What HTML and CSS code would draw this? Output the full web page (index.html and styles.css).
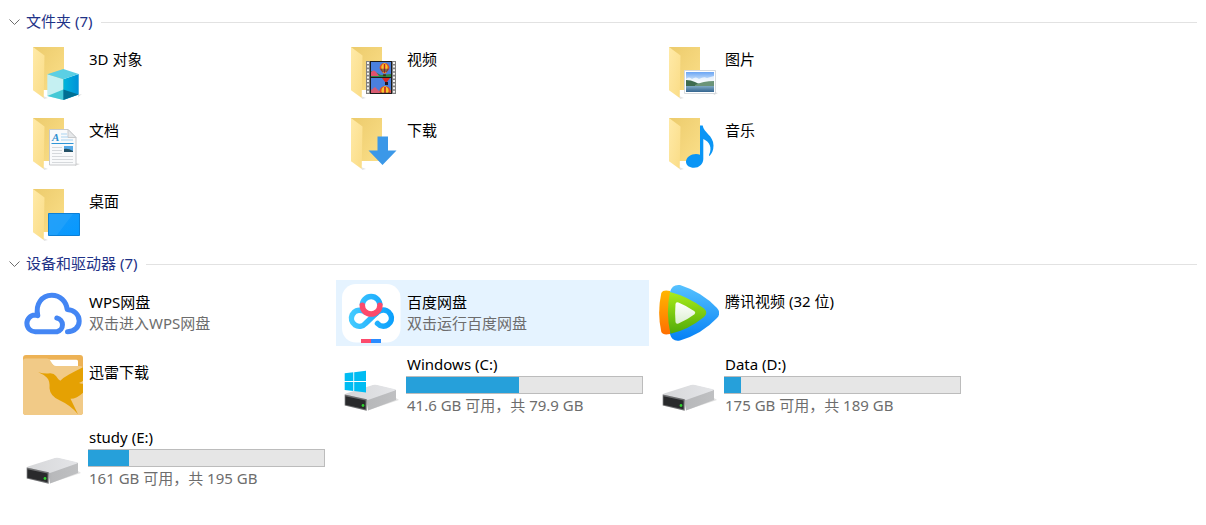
FILE: index.html
```html
<!DOCTYPE html>
<html lang="zh-CN">
<head>
<meta charset="UTF-8">
<title>此电脑</title>
<link rel="stylesheet" href="styles.css">
</head>
<body>

<!-- shared shapes -->
<svg class="defs" width="0" height="0" aria-hidden="true">
  <defs>
    <linearGradient id="back" x1="0" y1="0" x2="1" y2="1">
      <stop offset="0" stop-color="#eccb6c"/><stop offset="1" stop-color="#fbdf89"/>
    </linearGradient>
    <linearGradient id="flap" x1="0" y1="0" x2="1" y2="1">
      <stop offset="0" stop-color="#ffeaa8"/><stop offset="1" stop-color="#fadc86"/>
    </linearGradient>
    <linearGradient id="drive-top" x1="0" y1="0" x2="1" y2="0">
      <stop offset="0" stop-color="#d6d7d9"/><stop offset="1" stop-color="#e4e5e8"/>
    </linearGradient>
    <linearGradient id="drive-side" x1="0" y1="0" x2="1" y2="0">
      <stop offset="0" stop-color="#97989a"/><stop offset="0.5" stop-color="#b8b9bb"/><stop offset="1" stop-color="#bfc0c2"/>
    </linearGradient>
    <linearGradient id="sky" x1="0" y1="0" x2="0" y2="1">
      <stop offset="0" stop-color="#6aa5f4"/><stop offset="0.5" stop-color="#e3f1fb"/><stop offset="1" stop-color="#8fb6d4"/>
    </linearGradient>
    <linearGradient id="water" x1="0" y1="0" x2="0" y2="1">
      <stop offset="0" stop-color="#7fa9c4"/><stop offset="1" stop-color="#34658f"/>
    </linearGradient>
    <symbol id="folder" viewBox="0 0 60 60">
      <path d="M20 54l5 2-4 1z" fill="#e4e4e4"/>
      <path d="M10 5h31v43H10z" fill="url(#back)"/>
      <path d="M10 5l11.500 8.500L20.700 56 10 48.300z" fill="url(#flap)"/>
    </symbol>
    <symbol id="drive" viewBox="0 0 60 60">
      <path d="M25 56l33-11-3-2z" fill="#e3e3e3"/>
      <path d="M3.700 40L33.700 30 55 35v10L27 55.500 25 44z" fill="url(#drive-side)"/>
      <path d="M3.700 39.500Q4 38.800 5 38.500L32 30q2-.6 4 0l18 4.300q1.500.5 0 1.200L27 45z" fill="url(#drive-top)"/>
      <path d="M3.700 39.500l22 4.700v11.500l-22-5.200z" fill="#6d6e70"/>
      <path d="M4.500 41.200l20 4.300v8.800l-20-4.600z" fill="#292a2c"/>
      <circle cx="22" cy="50.500" r="1.400" fill="#2fd32f"/>
    </symbol>
    <symbol id="balloon" viewBox="0 0 12 15">
      <path d="M6 0a5.500 5.500 0 0 1 5.500 5.500Q11 8 7.500 11.500h-3Q1 8 .5 5.500A5.500 5.500 0 0 1 6 0z" fill="#e0501e"/>
      <path d="M6 0q4 2 3.500 5.500L7 11.500H5L2.500 5.500Q2 2 6 0z" fill="#f6c52c"/>
      <path d="M5.200 1h1.600v10H5.200z" fill="#c32020"/>
      <path d="M1 6.500h10L8.500 10h-5z" fill="#26264d" opacity=".5"/>
      <path d="M4.500 12.500h3V15h-3z" fill="#4a2a12"/>
    </symbol>
  </defs>
</svg>

<main>
  <section class="group">
    <h2><button type="button" class="group-header">
      <svg class="chevron" viewBox="0 0 12 8" aria-hidden="true"><path d="M.5 1.500l5 5 5-5"/></svg>
      <span class="group-title">文件夹 (7)</span>
    </button></h2>
    <ul class="tiles">
      <li class="tile">
        <svg class="icon" viewBox="0 0 60 60" aria-hidden="true">
          <defs><linearGradient id="cube-r"><stop offset="0" stop-color="#00b5dc"/><stop offset="1" stop-color="#0091d8"/></linearGradient></defs>
          <use href="#folder"/>
          <path d="M55 53l4-1-4 3z" fill="#ddd"/>
          <path d="M24.300 32.300l16 5V58l-16-4z" fill="#c5f0f2"/>
          <path d="M40.300 37.300l15.400-5.300v20.500L40.300 58z" fill="url(#cube-r)"/>
          <path d="M24.300 32.300L40.300 27l15.400 5-15.400 5.300z" fill="#5bcfe4"/>
          <path d="M24.300 54l16-6.500V58z" fill="#45c9d6"/>
          <path d="M40.300 47.500l15.400 5L40.300 58z" fill="#006f93"/>
        </svg>
        <div class="info"><span class="name">3D 对象</span></div>
      </li>
      <li class="tile">
        <svg class="icon" viewBox="0 0 60 60" aria-hidden="true">
          <use href="#folder"/>
          <path d="M25 19h30v33H25z" fill="#808080"/>
          <path d="M29 19h22v33H29z" fill="#1c1c1c"/>
          <path d="M27 20v32M53 20v32" stroke="#f4f4f4" stroke-width="2" stroke-dasharray="2 1.600"/>
          <path d="M30 20h20v15H30zM30 36h20v15H30z" fill="#4a80dd"/>
          <path d="M30 29l6 2 4 2 10-1v3H30z" fill="#2d8844"/>
          <path d="M30 30q3-3 5 0l3 4h-8z" fill="#e0506d"/>
          <path d="M30 48l4-3 4 4 12-1v3H30z" fill="#d75b72"/>
          <use href="#balloon" x="38" y="21" width="11" height="13.500"/>
          <path d="M41 36h8l-3 4h-2z" fill="#d9281e"/><path d="M44 40h3v3h-3z" fill="#211a24"/>
          <svg x="38" y="44" width="12" height="7" viewBox="0 0 12 7"><use href="#balloon" width="12" height="15"/></svg>
        </svg>
        <div class="info"><span class="name">视频</span></div>
      </li>
      <li class="tile">
        <svg class="icon" viewBox="0 0 60 60" aria-hidden="true">
          <use href="#folder"/>
          <path d="M54 50l5 1-4 2z" fill="#ddd"/>
          <path d="M25.500 28.500h31v23h-31z" fill="#fff" stroke="#d5d9dd"/>
          <path d="M27 30h28v20H27z" fill="url(#sky)"/>
          <path d="M27 37q3-3 6 0 4-3 7 0 5-3 8-1l7-2v7H27z" fill="#fff" opacity=".7"/>
          <path d="M27 38q5 0 9 2l8 4H27z" fill="#3e6b50"/>
          <path d="M36 43q8-4 19-4v5H36z" fill="#6b9478"/>
          <path d="M27 44h28v6H27z" fill="url(#water)"/>
        </svg>
        <div class="info"><span class="name">图片</span></div>
      </li>
      <li class="tile">
        <svg class="icon" viewBox="0 0 60 60" aria-hidden="true">
          <use href="#folder"/>
          <path d="M52 50l5 1-5 2z" fill="#ddd"/>
          <path d="M26.500 16.500H45l8 8V52H26.500z" fill="#f9fafb" stroke="#c8cacc"/>
          <path d="M45 16.500v8h8z" fill="#e6e8ea" stroke="#c8cacc"/>
          <text x="29" y="28" class="doc-letter">A</text>
          <path d="M38 21h6M38 24h7M38 27h12" stroke="#a9d3f0"/>
          <path d="M28.500 30.500h22" stroke="#2e95d6"/>
          <path d="M29 34.500h10M29 37.500h10M29 40.500h10M29 43.500h21M29 46.500h21M29 49.500h21" stroke="#d6d9dc"/>
          <path d="M41 33h9v6h-9z" fill="#55a9e6"/>
          <path d="M41 36q4-1 9 2v1h-9z" fill="#245166"/>
        </svg>
        <div class="info"><span class="name">文档</span></div>
      </li>
      <li class="tile">
        <svg class="icon" viewBox="0 0 60 60" aria-hidden="true">
          <use href="#folder"/>
          <path d="M36.500 23.500h10.500V37.500h8.500L41.500 52 27.500 37.500h9z" fill="#3b98e8"/>
        </svg>
        <div class="info"><span class="name">下载</span></div>
      </li>
      <li class="tile">
        <svg class="icon" viewBox="0 0 60 60" aria-hidden="true">
          <use href="#folder"/>
          <path d="M41 12.500h2.700c.8 7 10.800 10 10.800 20 0 5-1.700 8-4 10.500q-.8-.4-.4-1.300c3.400-7 .4-13-5.800-15.700V46c0 5-4.300 8.800-9.300 8.800-4.500 0-8-2.300-8-6 0-4.500 5-7.800 10-7.800q2.300 0 4 .8z" fill="#0a95f5"/>
        </svg>
        <div class="info"><span class="name">音乐</span></div>
      </li>
      <li class="tile">
        <svg class="icon" viewBox="0 0 60 60" aria-hidden="true">
          <defs><linearGradient id="screen" x1="0" y1="0" x2="1" y2="1"><stop offset="0" stop-color="#1a9af8"/><stop offset="1" stop-color="#0599ff"/></linearGradient></defs>
          <use href="#folder"/>
          <path d="M25.500 29.500h31v22h-31z" fill="url(#screen)" stroke="#0b7fd6"/>
          <path d="M26 51V30h24L34 51z" fill="#2aa5fa" opacity=".6"/>
        </svg>
        <div class="info"><span class="name">桌面</span></div>
      </li>
    </ul>
  </section>

  <section class="group">
    <h2><button type="button" class="group-header">
      <svg class="chevron" viewBox="0 0 12 8" aria-hidden="true"><path d="M.5 1.500l5 5 5-5"/></svg>
      <span class="group-title">设备和驱动器 (7)</span>
    </button></h2>
    <ul class="tiles">
      <li class="tile">
        <svg class="icon" viewBox="0 0 60 60" aria-hidden="true">
          <path d="M33.800 34a7 7 0 0 1 .2 13.700H12.500a8.300 8.300 0 0 1-.6-16.600q1.300 0 2.900.6C12 20 19 11.300 28.800 11.300c8.500 0 14.500 6 15.400 14.200 7 .5 12 5 12 11.400 0 6.200-5 10.800-11.700 10.800" fill="none" stroke="#4486f4" stroke-width="5" stroke-linecap="round" stroke-linejoin="round"/>
        </svg>
        <div class="info app"><span class="name">WPS网盘</span><span class="detail">双击进入WPS网盘</span></div>
      </li>
      <li class="tile selected">
        <svg class="icon" viewBox="0 0 60 60" aria-hidden="true">
          <defs><linearGradient id="pan" gradientUnits="userSpaceOnUse" x1="8" y1="0" x2="53" y2="0"><stop offset="0" stop-color="#46ccff"/><stop offset="1" stop-color="#0a9ffc"/></linearGradient></defs>
          <rect x="1" y="0" width="58.500" height="58.500" rx="14" fill="#fff"/>
          <g fill="none" stroke-width="5.500">
            <path d="M21.300 21.300a8.800 8.800 0 0 1 17.600 0" stroke="url(#pan)"/>
            <path d="M36 28.500L24.500 39.500A8 8 0 1 1 21 26.700q2 .5 4 2" stroke="url(#pan)"/>
            <path d="M36.500 39.500A8 8 0 1 0 40 26.500q-3 1-5 3" stroke="url(#pan)" stroke-linecap="round"/>
            <path d="M21.300 21.300a8.800 8.800 0 0 0 17.600 0" stroke="#fc4a6c" stroke-linecap="round"/>
          </g>
          <path d="M20 55h10v4H20z" fill="#fc4a6c"/><path d="M30 55h10v4H30z" fill="#2a8cff"/>
        </svg>
        <div class="info app"><span class="name">百度网盘</span><span class="detail">双击运行百度网盘</span></div>
      </li>
      <li class="tile">
        <svg class="icon" viewBox="0 0 60 60" aria-hidden="true">
          <defs>
            <linearGradient id="tx-orange" x1="0" y1="0" x2="0" y2="1"><stop offset="0" stop-color="#ffb600"/><stop offset="1" stop-color="#ff6f00"/></linearGradient>
            <linearGradient id="tx-blue" x1="0" y1="0" x2="0" y2="1"><stop offset="0" stop-color="#57c2ff"/><stop offset="1" stop-color="#0480f5"/></linearGradient>
            <linearGradient id="tx-green" x1="0" y1="0" x2="0" y2="1"><stop offset="0" stop-color="#a9ec1b"/><stop offset="1" stop-color="#50aa08"/></linearGradient>
            <linearGradient id="tx-white" x1="0" y1="0" x2="0" y2="1"><stop offset="0" stop-color="#fff"/><stop offset="1" stop-color="#dcefd0"/></linearGradient>
          </defs>
          <path d="M11 7Q4 5.500 2.300 9-2 29 2.300 48 4 51.500 11 50z" fill="url(#tx-orange)"/>
          <path d="M11 8q2-8 10-7Q43 8 58 24q4.500 5 0 10Q43 50 21 56.500 13 58 11 50z" fill="url(#tx-blue)"/>
          <path d="M11 8q18 4.500 34 16.500 4.500 4.200 0 8.500Q29 46 11.500 49.700 6.500 29 11 8z" fill="url(#tx-green)"/>
          <path d="M16.500 20q.3-2.500 3-1.500Q28 22 35.500 27.300q1.500 1.500 0 3Q28 36 19.500 39.500q-2.700.8-3-1.500-.8-9 0-18z" fill="url(#tx-white)"/>
        </svg>
        <div class="info"><span class="name">腾讯视频 (32 位)</span></div>
      </li>
      <li class="tile">
        <svg class="icon" viewBox="0 0 60 60" aria-hidden="true">
          <rect width="60" height="60" rx="3" fill="#edb255"/>
          <path d="M25 4.800h28.500q1.500 0 1.500 1.500V11H31z" fill="#fff"/>
          <path d="M0 6q0-2.500 2.500-2.500H24q2 0 3.200 2l2.300 3.500q1.200 2 3.500 2h24q3 0 3 3v43q0 3-3 3H3q-3 0-3-3z" fill="#f1ca87"/>
          <path d="M15.300 17.300q4.700 1.500 9.700 1.300 5.500-1 8 2.400 2 3.500 4.300 4.700 3.200-3.200 8.700-6.200 7.500-4 14-7.200v13.400q-1.500 1.300-4 2.300 2 1 4 .8v9q-6 6-12.500 6l7.500 15.500q-7.500-9-18-13.700-10-4.300-10.500-12.300.5-7.500-2.500-10.500-3-3.200-8.700-5.500z" fill="#e5a103"/>
        </svg>
        <div class="info"><span class="name">迅雷下载</span></div>
      </li>
      <li class="tile">
        <svg class="icon" viewBox="0 0 60 60" aria-hidden="true">
          <use href="#drive"/>
          <path d="M3.700 18.300l8.600-1V26H3.700zM13.200 17.200L25 15.800V26H13.200zM3.700 27h8.600v9l-8.600-1zM13.200 27H25v10.500l-11.800-1.400z" fill="#00bcf2"/>
        </svg>
        <div class="info drive">
          <span class="name">Windows (C:)</span>
          <div class="bar"><div class="used" style="width: 47.7%"></div></div>
          <span class="detail">41.6 GB 可用，共 79.9 GB</span>
        </div>
      </li>
      <li class="tile">
        <svg class="icon" viewBox="0 0 60 60" aria-hidden="true"><use href="#drive"/></svg>
        <div class="info drive">
          <span class="name">Data (D:)</span>
          <div class="bar"><div class="used" style="width: 7.2%"></div></div>
          <span class="detail">175 GB 可用，共 189 GB</span>
        </div>
      </li>
      <li class="tile">
        <svg class="icon" viewBox="0 0 60 60" aria-hidden="true"><use href="#drive"/></svg>
        <div class="info drive">
          <span class="name">study (E:)</span>
          <div class="bar"><div class="used" style="width: 17.4%"></div></div>
          <span class="detail">161 GB 可用，共 195 GB</span>
        </div>
      </li>
    </ul>
  </section>
</main>

</body>
</html>
```
FILE: styles.css
```css
* {
  box-sizing: border-box;
}

body {
  margin: 0;
  padding: 11px 9px;
  background: #fff;
  color: #000;
  font-family: "Noto Sans", "Noto Sans CJK SC", sans-serif;
  font-size: 15px;
}

.defs {
  position: absolute;
}

.group {
  margin-bottom: 7px;
}

h2 {
  margin: 0;
  font-size: 15px;
  font-weight: normal;
}

.group-header {
  display: flex;
  align-items: center;
  width: 100%;
  height: 22px;
  padding: 0;
  border: none;
  background: none;
  color: #1e3287;
  font: inherit;
  line-height: 20px;
  cursor: pointer;
}

.group-header::after {
  content: "";
  flex: 1;
  height: 1px;
  margin-left: 9px;
  background: #e2e2e2;
}

.group-title {
  padding-bottom: 2px;
}

.chevron {
  width: 12px;
  height: 8px;
  margin-right: 5px;
  fill: none;
  stroke: #6d6d6d;
}

.tiles {
  display: grid;
  grid-template-columns: repeat(auto-fill, 313px);
  gap: 5px;
  margin: 5px 0 0;
  padding: 0 0 0 9px;
  list-style: none;
}

.tile {
  display: flex;
  gap: 5px;
  min-height: 66px;
  padding: 4px 6px 2px 5px;
}

.tile.selected {
  background: #e5f3ff;
}

.icon {
  flex: none;
  width: 60px;
  height: 60px;
}

.doc-letter {
  fill: #2e8fd0;
  font: italic bold 11px "Liberation Serif", serif;
}

.info {
  flex: 1;
  padding-top: 7px;
  line-height: 21px;
}

.info.app {
  padding-top: 8px;
}

.name,
.detail {
  display: block;
  padding-left: 1px;
  white-space: nowrap;
}

.detail {
  color: #6d6d6d;
}

/* drives have the usage bar between the two lines */
.info.drive {
  padding: 0 0 2px;
  line-height: 20px;
}

.drive .name {
  padding-bottom: 2px;
  line-height: 18px;
}

.bar {
  height: 18px;
  margin: 1px 0;
  border: 1px solid #bcbcbc;
  border-left: none;
  background: #e6e6e6;
}

.used {
  height: 100%;
  background: #26a0da;
}
```
